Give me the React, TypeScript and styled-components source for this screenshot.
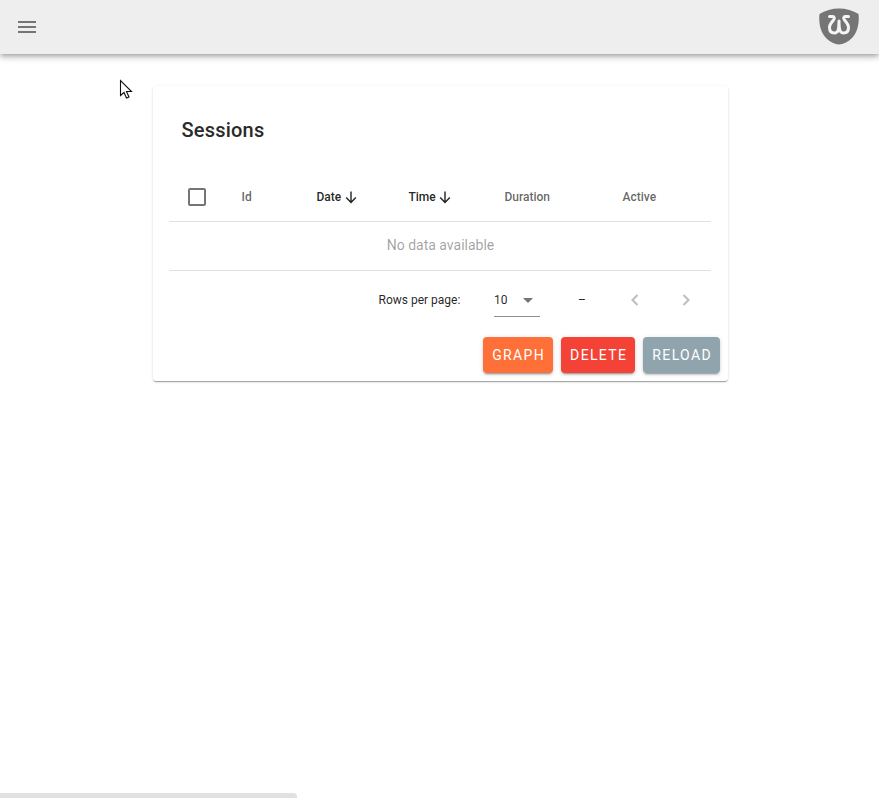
import * as React from 'react';
import styled, { createGlobalStyle } from 'styled-components';

const GlobalStyle = createGlobalStyle`
  html, body {
    margin: 0;
    height: 100%;
    background: #fff;
    overflow: hidden;
    font-family: Roboto, "Liberation Sans", sans-serif;
  }
`;

const Page = styled.div`
  position: relative;
  height: 798px;
  overflow: hidden;
`;

const AppBar = styled.header`
  height: 54px;
  background: #eeeeee;
  box-shadow: 0 2px 4px -1px rgba(0,0,0,.2), 0 4px 5px 0 rgba(0,0,0,.14), 0 1px 10px 0 rgba(0,0,0,.12);
  display: flex;
  align-items: center;
  justify-content: space-between;
  padding: 0 20px 0 15px;
`;

const MenuButton = styled.button`
  border: none;
  background: none;
  padding: 0;
  width: 24px;
  height: 24px;
  display: block;
`;

const Main = styled.main`
  padding: 32px 151px 0 153px;
`;

const Card = styled.section`
  height: 295px;
  box-sizing: border-box;
  background: #fff;
  border-radius: 3px;
  box-shadow: 0 2px 1px -1px rgba(0,0,0,.2), 0 1px 1px 0 rgba(0,0,0,.14), 0 1px 3px 0 rgba(0,0,0,.12);
  padding: 0 8px 8px 16px;
  display: flex;
  flex-direction: column;
`;

const Title = styled.h2`
  margin: 0;
  flex: 0 0 53px;
  padding: 33px 0 0 12.5px;
  font-size: 20px;
  line-height: 22px;
  font-weight: 500;
  letter-spacing: .2px;
  color: #2a2a2a;
`;

const Table = styled.div`
  width: 542px;
  flex-shrink: 0;
`;

const HeadRow = styled.div`
  display: grid;
  grid-template-columns: 72px 75px 92px 96px 118px 89px;
  align-items: center;
  height: 49px;
  border-bottom: 1px solid #e0e0e0;
`;

const CheckCell = styled.div`
  padding-left: 19px;
  display: flex;
`;

const Checkbox = styled.span`
  width: 14px;
  height: 14px;
  border: 2px solid #757575;
  border-radius: 2px;
  display: block;
`;

const HeadCell = styled.div<{ $active?: boolean }>`
  display: flex;
  align-items: center;
  gap: 1.5px;
  padding-left: .5px;
  font-size: 12px;
  font-weight: 500;
  color: ${({ $active }) => ($active ? 'rgba(0,0,0,.87)' : 'rgba(0,0,0,.62)')};
`;

const EmptyRow = styled.div`
  height: 46px;
  padding: 0 0 2px 1px;
  border-bottom: 1px solid #e0e0e0;
  display: flex;
  align-items: center;
  justify-content: center;
  font-size: 14px;
  color: rgba(0,0,0,.38);
`;

const Footer = styled.div`
  display: flex;
  align-items: flex-start;
  height: 66px;
  padding-left: 209.5px;
  font-size: 12px;
  color: rgba(0,0,0,.87);
`;

const RowsLabel = styled.span`
  line-height: 58px;
  flex: 0 0 115.5px;
`;

const Select = styled.div`
  flex: 0 0 46px;
  height: 46px;
  box-sizing: border-box;
  border-bottom: 1px solid #8f8f8f;
  display: flex;
  align-items: flex-start;
  justify-content: space-between;
  line-height: 58px;
`;

const SelectArrow = styled.span`
  width: 0;
  height: 0;
  border-left: 5px solid transparent;
  border-right: 5px solid transparent;
  border-top: 5px solid #757575;
  margin: 27px 7px 0 0;
`;

const Range = styled.span`
  line-height: 58px;
  margin-left: 38px;
  flex: 0 0 49px;
`;

const PageButton = styled.span`
  flex: 0 0 16px;
  height: 16px;
  margin: 21px 35px 0 0;
  display: block;

  &:last-child {
    margin-right: 0;
  }
`;

const Actions = styled.div`
  display: flex;
  justify-content: flex-end;
  gap: 8px;
`;

const ActionButton = styled.button<{ $color: string }>`
  height: 36px;
  padding: 0 8px 0 9px;
  border: none;
  border-radius: 4px;
  background: ${({ $color }) => $color};
  color: #fff;
  font-family: Roboto, "Liberation Sans", sans-serif;
  font-size: 14px;
  font-weight: 400;
  letter-spacing: 1.36px;
  box-shadow: 0 3px 1px -2px rgba(0,0,0,.2), 0 2px 2px 0 rgba(0,0,0,.14), 0 1px 5px 0 rgba(0,0,0,.12);
`;

const Cursor = styled.svg`
  position: absolute;
  left: 119px;
  top: 79px;
`;

const ScrollThumb = styled.div`
  position: absolute;
  left: 0;
  bottom: 0;
  width: 297px;
  height: 5px;
  background: #dfe1e3;
  border-top-right-radius: 4px;
`;

const SortArrow = () => (
  <svg width="16" height="16" viewBox="0 0 16 16" fill="none" stroke="#212121" strokeWidth="1.4">
    <path d="M8 2.500v11M3.200 8.600 8 13.400l4.800-4.800" />
  </svg>
);

const Logo = () => (
  <svg width="40" height="38" viewBox="0 0 40 38">
    <path
      d="M20 .5C27 .5 34 2.500 39.500 6C40.500 15 38.500 24 33 30C29 34 24 36.500 20 36.500C16 36.500 11 34 7 30C1.500 24 -.5 15 .5 6C6 2.500 13 .5 20 .5Z"
      fill="#757575"
    />
    <path
      d="M10.500 8.500H13.500C15.500 8.500 15.800 10.500 14.500 12C12 14.800 10.500 17 10.500 19.500C10.500 23.500 13 25 15.500 25C18.500 25 20 23 20 13C20 23 21.500 25 24.500 25C27 25 29.500 23.500 29.500 19.500C29.500 17 28 14.800 25.500 12C24.200 10.500 24.500 8.500 26.500 8.500H29.500"
      fill="none"
      stroke="#f5f5f5"
      strokeWidth="3"
      strokeLinecap="round"
      strokeLinejoin="round"
    />
  </svg>
);

const App: React.FunctionComponent = () => (
  <Page>
    <GlobalStyle />
    <AppBar>
      <MenuButton aria-label="menu">
        <svg width="24" height="24" viewBox="0 0 24 24" fill="#757575">
          <path d="M3 18h18v-2H3v2zm0-5h18v-2H3v2zm0-7v2h18V6H3z" />
        </svg>
      </MenuButton>
      <Logo />
    </AppBar>
    <Main>
      <Card>
        <Title>Sessions</Title>
        <Table>
          <HeadRow>
            <CheckCell><Checkbox /></CheckCell>
            <HeadCell>Id</HeadCell>
            <HeadCell $active>Date <SortArrow /></HeadCell>
            <HeadCell $active>Time <SortArrow /></HeadCell>
            <HeadCell>Duration</HeadCell>
            <HeadCell>Active</HeadCell>
          </HeadRow>
          <EmptyRow>No data available</EmptyRow>
          <Footer>
            <RowsLabel>Rows per page:</RowsLabel>
            <Select>10<SelectArrow /></Select>
            <Range>–</Range>
            <PageButton>
              <svg width="16" height="16" viewBox="0 0 16 16" fill="none" stroke="#bdbdbd" strokeWidth="2">
                <path d="M10.500 3 5.500 8l5 5" />
              </svg>
            </PageButton>
            <PageButton>
              <svg width="16" height="16" viewBox="0 0 16 16" fill="none" stroke="#bdbdbd" strokeWidth="2">
                <path d="M5.500 3l5 5-5 5" />
              </svg>
            </PageButton>
          </Footer>
        </Table>
        <Actions>
          <ActionButton $color="#ff7039">GRAPH</ActionButton>
          <ActionButton $color="#f44336">DELETE</ActionButton>
          <ActionButton $color="#90a4ae">RELOAD</ActionButton>
        </Actions>
      </Card>
    </Main>
    <Cursor width="16" height="22" viewBox="0 0 16 22">
      <path d="M1.500 1.500V16.500L5 13.500L7.500 19L10 18L7.500 12.500H12.500Z" fill="#fff" stroke="#111" strokeWidth="1.100" />
    </Cursor>
    <ScrollThumb />
  </Page>
);

export default App;
